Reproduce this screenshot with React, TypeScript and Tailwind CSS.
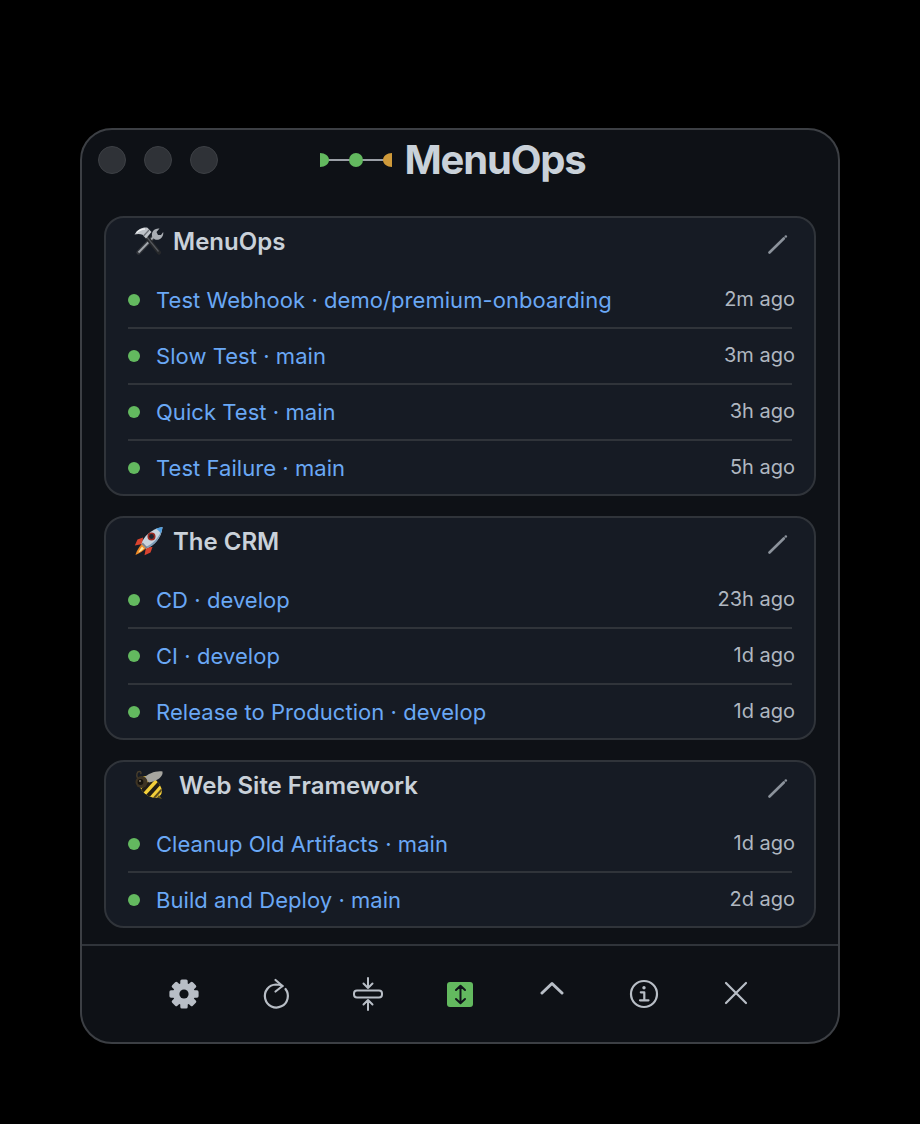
import type { ReactNode } from "react";

type Run = { name: string; time: string };
type Group = { title: string; icon: ReactNode; gap: string; runs: Run[] };

const HammerWrench = () => (
  <svg width="30" height="30" viewBox="0 0 30 30">
    {/* wrench */}
    <path d="M4.500 26.500 L20.500 10" stroke="#34373c" strokeWidth="4.400" strokeLinecap="round" />
    <path d="M4.500 26.500 L20 10.500" stroke="#a3a7ad" strokeWidth="1.800" />
    <path d="M18.500 11.500 C16.500 6.500 20 2 25.500 2.500 L22.500 6 L24 9 L27 9 L29.200 6 C30 11 25.500 15 21 13.500 Z" fill="#a9adb3" />
    {/* hammer handle */}
    <path d="M11 9 L25 26.500" stroke="#26282b" strokeWidth="4.200" strokeLinecap="round" />
    <path d="M12 10 L24.500 25.500" stroke="#55585d" strokeWidth="1.200" />
    {/* hammer head */}
    <path d="M0.500 8.500 C3.500 3.500 9 .800 13.500 1.800 L17.500 6 L12 12.500 L8.500 8.800 C6 7.500 3 7.800 .500 8.500 Z" fill="#bfc3c8" />
    <path d="M2.500 6.800 C5 4.200 8 3 11 3" stroke="#eceef0" strokeWidth="1.300" fill="none" />
    <path d="M9.500 10 L15 4" stroke="#6f7379" strokeWidth="1.300" />
  </svg>
);

const Rocket = () => (
  <svg width="30" height="30" viewBox="0 0 30 30">
    <path d="M9 11.500 L3.500 13.500 L.800 19.500 L8.500 18 Z" fill="#d8432f" />
    <path d="M18.500 21 L16.500 26.500 L10.500 29.200 L12 21.500 Z" fill="#d8432f" />
    <path d="M8.500 17.500 C5.500 20 2.500 25 1.500 29 C5.500 27.500 10 24.500 12.500 21.500 Z" fill="#f08a24" />
    <path d="M8 20.500 C6.500 22.500 5 25 4.300 26.500 C6.500 25.500 8.500 24 10 22.500 Z" fill="#fde9a0" />
    <path d="M7.500 18 C9 11 17 3 28.500 1 C27.500 12 20 20 12 22.500 Z" fill="#c9d4de" />
    <path d="M11 21 C18 19 26 11 27.800 2.500 L28.500 1 C27.500 12 20 20 12 22.500 Z" fill="#7d9db8" />
    <path d="M21.500 2.700 C23.800 1.900 26.100 1.400 28.500 1 C28.200 3.300 27.600 5.500 26.800 7.500 C25.500 5.300 23.800 3.700 21.500 2.700 Z" fill="#4f9fe0" />
    <circle cx="17.500" cy="10.500" r="4" fill="#9a2a22" />
    <circle cx="17.500" cy="10.500" r="2.400" fill="#1b2430" />
    <path d="M7.500 18 L12 22.500 L13.500 21.500 L8.800 16.500 Z" fill="#7c828b" />
  </svg>
);

const Bee = () => (
  <svg width="30" height="30" viewBox="0 0 30 30">
    <defs>
      <clipPath id="bee-body">
        <ellipse cx="0" cy="0" rx="13" ry="8.800" />
      </clipPath>
    </defs>
    <path d="M3.500 8 C2 4.500 3 1.500 5.500 1.500 C7 1.500 7.500 3 6.500 4" fill="none" stroke="#4a3f2c" strokeWidth="1.300" />
    <g transform="translate(16.500 17) rotate(42)">
      <g clipPath="url(#bee-body)">
        <rect x="-13" y="-9" width="26" height="18" fill="#f3cf3a" />
        <rect x="-5.500" y="-9" width="4" height="18" fill="#221d16" />
        <rect x="2" y="-9" width="4" height="18" fill="#221d16" />
        <rect x="9" y="-9" width="2" height="18" fill="#5b4a1c" />
      </g>
    </g>
    <path d="M25 25 L28 29 L23 27.500 Z" fill="#6b5a20" />
    <path d="M10 8 C14 3.500 22 .500 28.500 1.500 C29.500 6 24 11 15 12.500 Z" fill="#a6a59f" />
    <circle cx="7.500" cy="12" r="6" fill="#3d3323" />
    <circle cx="6.500" cy="12" r="2.900" fill="#14110d" />
    <circle cx="6" cy="11" r="0.900" fill="#8f8674" />
  </svg>
);

const groups: Group[] = [
  {
    title: "MenuOps",
    icon: <HammerWrench />,
    gap: "gap-[9px]",
    runs: [
      { name: "Test Webhook · demo/premium-onboarding", time: "2m ago" },
      { name: "Slow Test · main", time: "3m ago" },
      { name: "Quick Test · main", time: "3h ago" },
      { name: "Test Failure · main", time: "5h ago" },
    ],
  },
  {
    title: "The CRM",
    icon: <Rocket />,
    gap: "gap-[9px]",
    runs: [
      { name: "CD · develop", time: "23h ago" },
      { name: "CI · develop", time: "1d ago" },
      { name: "Release to Production · develop", time: "1d ago" },
    ],
  },
  {
    title: "Web Site Framework",
    icon: <Bee />,
    gap: "gap-[15px]",
    runs: [
      { name: "Cleanup Old Artifacts · main", time: "1d ago" },
      { name: "Build and Deploy · main", time: "2d ago" },
    ],
  },
];

const Pencil = () => (
  <svg width="20" height="20" viewBox="0 0 20 20" fill="none">
    <path d="M1.500 18.500 L15.800 4.500" stroke="#8b929b" strokeWidth="2.600" strokeLinecap="round" />
    <circle cx="17.800" cy="2.500" r="1.300" fill="#8b929b" />
  </svg>
);

const Gear = () => (
  <svg width="30" height="30" viewBox="0 0 30 30" fill="#b8bec6">
    {[0, 45, 90, 135, 180, 225, 270, 315].map((a) => (
      <rect key={a} x="11.300" y="0.400" width="7.400" height="8" rx="1.600" transform={`rotate(${a} 15 15)`} />
    ))}
    <circle cx="15" cy="15" r="11" />
    <circle cx="15" cy="15" r="4.600" fill="#0e1116" />
  </svg>
);

const Refresh = () => (
  <svg width="30" height="32" viewBox="0 0 30 32" fill="none" stroke="#b8bec6" strokeWidth="2.200" strokeLinecap="round" strokeLinejoin="round">
    <path d="M24.500 11 A11.500 11.500 0 1 1 15 6.500 C17 6.500 19.500 7 21.500 8" />
    <path d="M14.500 2 L21.500 8 L14.500 13.500" />
  </svg>
);

const Compress = () => (
  <svg width="30" height="34" viewBox="0 0 30 34" fill="none" stroke="#b8bec6" strokeWidth="2" strokeLinecap="round" strokeLinejoin="round">
    <path d="M15 1 V11 M10.500 6.500 L15 11 L19.500 6.500" />
    <rect x="1" y="13.500" width="28" height="7" rx="3" />
    <path d="M15 33 V23 M10.500 27.500 L15 23 L19.500 27.500" />
  </svg>
);

const ExpandOn = () => (
  <div className="flex h-[25px] w-[26px] items-center justify-center rounded-[3px] bg-[#63b95f]">
    <svg width="13" height="21" viewBox="0 0 13 21" fill="none" stroke="#10141a" strokeWidth="2" strokeLinecap="round" strokeLinejoin="round">
      <path d="M6.500 2 V19 M2 6 L6.500 1.800 L11 6 M2 15 L6.500 19.200 L11 15" />
    </svg>
  </div>
);

const Chevron = () => (
  <svg width="24" height="14" viewBox="0 0 24 14" fill="none" stroke="#b8bec6" strokeWidth="3" strokeLinecap="round" strokeLinejoin="round" className="mb-[12px]">
    <path d="M2 12 L12 2.500 L22 12" />
  </svg>
);

const Info = () => (
  <svg width="30" height="30" viewBox="0 0 30 30" fill="none" stroke="#b8bec6" strokeWidth="2.200">
    <circle cx="15" cy="15" r="13" />
    <circle cx="15" cy="8.800" r="1.700" fill="#b8bec6" stroke="none" />
    <path d="M11.800 13.300 H15.300 V21 M11 21.300 H19.500" strokeLinecap="round" strokeLinejoin="round" />
  </svg>
);

const Close = () => (
  <svg width="24" height="24" viewBox="0 0 24 24" fill="none" stroke="#b8bec6" strokeWidth="2.200" strokeLinecap="round" className="mb-[2px]">
    <path d="M2 2 L22 22 M22 2 L2 22" />
  </svg>
);

const Logo = () => (
  <svg width="72" height="16" viewBox="0 0 72 16">
    <path d="M8 8 H64" stroke="#9a9fa6" strokeWidth="2" />
    <path d="M0 1 C5 1 9 4 9 8 C9 12 5 15 0 15 Z" fill="#63b95f" />
    <circle cx="36" cy="8" r="7" fill="#63b95f" />
    <path d="M72 1 C67 1 63 4 63 8 C63 12 67 15 72 15 Z" fill="#cf9a3a" />
  </svg>
);

const tools = [<Gear />, <Refresh />, <Compress />, <ExpandOn />, <Chevron />, <Info />, <Close />];

export default function App() {
  return (
    <div className="flex min-h-[1124px] w-full justify-center bg-black pt-[128px] font-['Inter',sans-serif]">
      <div className="flex h-[916px] w-[760px] flex-col rounded-[32px] border-2 border-[#3c3f44] bg-[#0e1116]">
        {/* title bar */}
        <div className="relative flex h-[60px] shrink-0 items-center justify-center">
          <div className="absolute left-[16px] top-[16px] flex gap-[18px]">
            <span className="h-[28px] w-[28px] rounded-full border border-[#3d4045] bg-[#2f3237]" />
            <span className="h-[28px] w-[28px] rounded-full border border-[#3d4045] bg-[#2f3237]" />
            <span className="h-[28px] w-[28px] rounded-full border border-[#3d4045] bg-[#2f3237]" />
          </div>
          <div className="flex items-center gap-[13px] pr-[15px]">
            <Logo />
            <span className="text-[40px] font-bold leading-none tracking-[-1.2px] text-[#c9d1d9]">MenuOps</span>
          </div>
        </div>

        {/* workflow groups */}
        <div className="flex shrink-0 flex-col gap-[20px] px-[22px] pt-[26px]">
          {groups.map((g) => (
            <section key={g.title} className="rounded-[20px] border-2 border-[#30343a] bg-[#161b24]">
              <div className="flex h-[55px] items-start justify-between pl-[28px] pr-[26px] pt-[6px]">
                <div className={`flex items-center ${g.gap}`}>
                  <div className="mb-[3px]">{g.icon}</div>
                  <span className="text-[24px] font-semibold tracking-[0px] text-[#c9d1d9]">{g.title}</span>
                </div>
                <div className="mt-[10px]">
                  <Pencil />
                </div>
              </div>
              <div className="flex flex-col px-[22px]">
                {g.runs.map((r, i) => (
                  <div
                    key={r.name}
                    className={
                      i < g.runs.length - 1
                        ? "flex h-[56px] items-center justify-between border-b-2 border-[#30343a]"
                        : "flex h-[53px] items-center justify-between pt-[1px]"
                    }
                  >
                    <div className="flex items-center gap-[16px]">
                      <span className="h-[12px] w-[12px] rounded-full bg-[#63b95f]" />
                      <span className="text-[22px] tracking-[0.05px] text-[#6aa8f5]">{r.name}</span>
                    </div>
                    <span className="mb-[2px] mr-[-3px] text-[20px] text-[#b0b7c0]">{r.time}</span>
                  </div>
                ))}
              </div>
            </section>
          ))}
        </div>

        {/* toolbar */}
        <div className="mt-[16px] flex h-[98px] shrink-0 items-center border-t-2 border-[#30343a] pl-[56px]">
          {tools.map((t, i) => (
            <div key={i} className="flex w-[92px] items-center justify-center">
              {t}
            </div>
          ))}
        </div>
      </div>
    </div>
  );
}
